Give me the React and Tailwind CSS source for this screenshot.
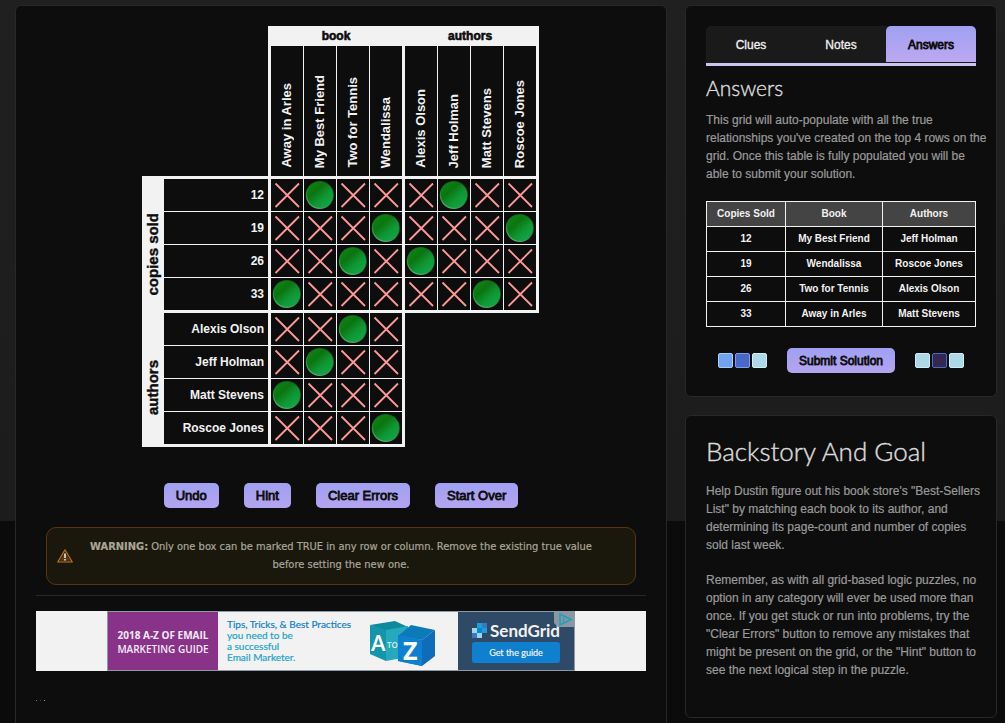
import React from "react";

const BOOKS = ["Away in Arles", "My Best Friend", "Two for Tennis", "Wendalissa"];
const AUTHORS = ["Alexis Olson", "Jeff Holman", "Matt Stevens", "Roscoe Jones"];

const SOLD_ROWS = [
  { label: "12", marks: "xoxxxoxx" },
  { label: "19", marks: "xxxoxxxo" },
  { label: "26", marks: "xxoxoxxx" },
  { label: "33", marks: "oxxxxxox" },
];

const AUTHOR_ROWS = [
  { label: "Alexis Olson", marks: "xxox" },
  { label: "Jeff Holman", marks: "xoxx" },
  { label: "Matt Stevens", marks: "oxxx" },
  { label: "Roscoe Jones", marks: "xxxo" },
];

const ANSWERS = [
  ["12", "My Best Friend", "Jeff Holman"],
  ["19", "Wendalissa", "Roscoe Jones"],
  ["26", "Two for Tennis", "Alexis Olson"],
  ["33", "Away in Arles", "Matt Stevens"],
];

const LINE = "border-[#f2f2f2]";

function Mark({ value }) {
  if (value === "o") {
    return (
      <svg viewBox="0 0 32 32" className="block size-8" aria-hidden="true">
        <circle cx="15.8" cy="16" r="14" fill="url(#rim)" />
        <circle cx="16" cy="15.8" r="13" fill="url(#ball)" />
      </svg>
    );
  }
  return (
    <svg viewBox="0 0 32 32" className="block size-8" aria-hidden="true">
      <path d="M4.5 4.5 28 28M28 4.5 4.5 28" stroke="#ff9999" strokeWidth="1.8" fill="none" />
    </svg>
  );
}

function Gradients() {
  return (
    <svg className="absolute size-0" aria-hidden="true">
      <defs>
        <linearGradient id="ball" x1="0.15" y1="0.1" x2="0.85" y2="0.9">
          <stop offset="0" stopColor="#0c8210" />
          <stop offset="0.3" stopColor="#0b7510" />
          <stop offset="0.65" stopColor="#0f9634" />
          <stop offset="1" stopColor="#11a548" />
        </linearGradient>
        <linearGradient id="rim" x1="0.7" y1="0" x2="0.3" y2="1">
          <stop offset="0" stopColor="#0b5a14" />
          <stop offset="0.6" stopColor="#1c8234" />
          <stop offset="1" stopColor="#58b070" />
        </linearGradient>
      </defs>
    </svg>
  );
}

function MarkCells({ row }) {
  return row.marks.split("").map((mark, i) => (
    <td
      key={i}
      className={`p-0 ${LINE} ${i % 4 === 3 ? "border-r-3" : "border-r"} ${row.last ? "border-b-3" : "border-b"}`}
    >
      <button type="button" className="block size-8" aria-label={mark === "o" ? "True" : "False"}>
        <Mark value={mark} />
      </button>
    </td>
  ));
}

function RowGroup({ title, rows, trailing }) {
  return rows.map((row, r) => {
    const last = r === rows.length - 1;
    return (
      <tr key={row.label}>
        {r === 0 && (
          <th rowSpan={4} className="bg-[#f2f2f2] p-0">
            <div className="mr-auto ml-auto w-4 rotate-180 pb-4 text-center text-[15px] leading-4 font-bold text-[#0d0d0d] [-webkit-text-stroke:0.4px_#0d0d0d] [writing-mode:vertical-rl]">
              {title}
            </div>
          </th>
        )}
        <th
          scope="row"
          className={`border-r-3 ${LINE} ${last ? "border-b-3" : "border-b"} p-0 pr-1 text-right text-[12px] leading-4 font-bold text-[#f2f2f2]`}
        >
          {row.label}
        </th>
        <MarkCells row={{ ...row, last }} />
        {trailing && r === 0 && <td rowSpan={4} colSpan={4} className="p-0" />}
      </tr>
    );
  });
}

function LogicGrid() {
  return (
    <div className="mx-auto w-[398px]">
      <table className="w-[397px] table-fixed border-separate border-spacing-0">
        <colgroup>
          <col className="w-[22px]" />
          <col className="w-[107px]" />
          <col className="w-[33px]" />
          <col className="w-[33px]" />
          <col className="w-[33px]" />
          <col className="w-[35px]" />
          <col className="w-[33px]" />
          <col className="w-[33px]" />
          <col className="w-[33px]" />
          <col className="w-[35px]" />
        </colgroup>
        <thead>
          <tr className="h-5">
            <td rowSpan={2} colSpan={2} className={`border-r-3 border-b-3 p-0 ${LINE}`} />
            {["book", "authors"].map((t) => (
              <th
                key={t}
                colSpan={4}
                className="h-5 bg-[#f2f2f2] p-0 pr-1 text-[12px] leading-5 font-bold text-[#0d0d0d] [-webkit-text-stroke:0.6px_#0d0d0d]"
              >
                {t}
              </th>
            ))}
          </tr>
          <tr>
            {[...BOOKS, ...AUTHORS].map((name, i) => (
              <th
                key={name}
                scope="col"
                className={`h-[133px] border-b-3 p-0 align-bottom ${LINE} ${i % 4 === 3 ? "border-r-3" : "border-r"}`}
              >
                <div className="mr-auto mb-2 ml-auto w-4 rotate-180 text-left text-[13px] leading-4 font-bold whitespace-nowrap text-[#f2f2f2] [writing-mode:vertical-rl]">
                  {name}
                </div>
              </th>
            ))}
          </tr>
        </thead>
        <tbody>
          <RowGroup title="copies sold" rows={SOLD_ROWS} />
          <RowGroup title="authors" rows={AUTHOR_ROWS} trailing />
        </tbody>
      </table>
    </div>
  );
}

function ActionButton({ size = "text-[13px]", children }) {
  return (
    <button
      type="button"
      className={`h-[25px] rounded-[5px] bg-linear-to-b from-[#a0a0f2] to-[#b4a4f0] px-3 leading-4 text-[#0d0d0d] [-webkit-text-stroke:0.8px_#0d0d0d] ${size}`}
    >
      {children}
    </button>
  );
}

function Cubes() {
  return (
    <svg viewBox="0 0 68 46" className="h-[46px] w-[68px]" aria-hidden="true">
      <path d="M1 5 26 1 39 7 17 11z" fill="#0d8a9c" />
      <path d="M1 5 17 10v31L1 34z" fill="#1395ab" />
      <path d="M17 10 39 6v31l-22 4z" fill="#27a9bd" />
      <path d="M29 16 42 5 66 10 53 20z" fill="#0d7ab8" />
      <path d="M29 15 53 20v26L29 41z" fill="#0f80d0" />
      <path d="M53 20 66 10v26L53 46z" fill="#0e6cbb" />
      <g fontFamily="'Open Sans', sans-serif" fill="#fff">
        <text x="2" y="31" fontSize="22" fontWeight="600">A</text>
        <text x="18" y="28" fontSize="8" fontWeight="600" fill="#d7f0f4">TO</text>
        <path d="M29 15 53 20v26L29 41z" fill="#0f80d0" />
        <text x="34" y="40" fontSize="25" fontWeight="700">Z</text>
      </g>
    </svg>
  );
}

function SendGridMark() {
  return (
    <svg viewBox="0 0 15 15" className="size-[15px] shrink-0" aria-hidden="true">
      <path d="M0 5h5v5H0z" fill="#9dd6ea" />
      <path d="M0 10h5v5H0z" fill="#3a78c4" />
      <path d="M5 10h5v5H5z" fill="#9dd6ea" />
      <path d="M5 0h5v5H5z" fill="#1ba0dc" />
      <path d="M5 5h5v5H5z" fill="#0d86d0" />
      <path d="M10 0h5v5h-5z" fill="#3a78c4" />
      <path d="M10 5h5v5h-5z" fill="#1ba0dc" />
    </svg>
  );
}

function Banner() {
  return (
    <div className="mt-[15px] flex justify-center bg-[#f2f2f2]">
      <a
        href="#guide"
        className="relative flex h-[60px] w-[468px] border border-[#8d9aa5] font-['Lato',sans-serif]"
      >
        <span className="flex w-[110px] shrink-0 flex-col items-center justify-center bg-[#883288] pt-[2px] font-['Open_Sans',sans-serif] text-[10px] leading-[14px] whitespace-nowrap text-[#f4ecf8]">
          <span className="font-bold">2018 A-Z OF EMAIL</span>
          <span className="font-semibold">MARKETING GUIDE</span>
        </span>
        <span className="flex w-[142px] shrink-0 flex-col justify-center pl-[9px] text-[10px] leading-[11px] whitespace-nowrap text-[#21a3c9] [-webkit-text-stroke:0.2px]">
          <span className="text-[#0f7fd0]">Tips, Tricks, &amp; Best Practices</span>
          <span>you need to be</span>
          <span>a successful</span>
          <span>Email Marketer.</span>
        </span>
        <span className="flex flex-1 items-center pl-[9px] pt-1">
          <Cubes />
        </span>
        <span className="flex w-[116px] shrink-0 flex-col items-center bg-[#2e4a66] pt-[7px]">
          <span className="flex w-[88px] items-center gap-[3px] text-[17px] leading-[23px] font-bold whitespace-nowrap text-[#f2f2f2]">
            <SendGridMark />
            SendGrid
          </span>
          <span className="h-[21px] w-[88px] rounded-[3px] bg-[#0f7fd0] text-center text-[9px] leading-[21px] text-[#f2f2f2] [-webkit-text-stroke:0.2px]">
            Get the guide
          </span>
        </span>
        <svg viewBox="0 0 20 15" className="absolute top-0 right-0 h-[15px] w-5" aria-hidden="true">
          <path d="M0 0h20v15H4L0 11z" fill="#8b97a1" />
          <path d="M6 2v11l11-5.5z" fill="none" stroke="#20a0c0" strokeWidth="1.5" />
          <path d="M9.5 6.5V10M9.5 4.5v1" stroke="#20a0c0" strokeWidth="1.5" />
        </svg>
      </a>
    </div>
  );
}

function WarningIcon() {
  return (
    <svg viewBox="0 0 16 14" className="h-[14px] w-4 shrink-0" aria-hidden="true">
      <path d="M8 .8 15.3 13H.7z" fill="#3a2610" stroke="#b8731c" strokeWidth="1.2" strokeLinejoin="round" />
      <path d="M8 3.8 12.8 11.5H3.2z" fill="#5c3a14" />
      <path d="M8 4.5V9M8 10v1.5" stroke="#dcdcdc" strokeWidth="1.7" />
    </svg>
  );
}

function Swatches({ colors }) {
  return (
    <div className="flex gap-[2px]" aria-hidden="true">
      {colors.map((c, i) => (
        <span key={i} className={`size-[15px] rounded-[2px] border ${c}`} />
      ))}
    </div>
  );
}

function Panel({ className, children }) {
  return <section className={`border border-[#282828] bg-[#0d0d0d] p-5 ${className}`}>{children}</section>;
}

function Tab({ active, children }) {
  return (
    <button
      type="button"
      role="tab"
      aria-selected={Boolean(active)}
      className={`h-9 flex-1 rounded-t-[5px] pt-px text-[12px] leading-4 ${
        active
          ? "bg-linear-to-b from-[#a0a0f2] to-[#bca8f0] text-[#0d0d0d] [-webkit-text-stroke:0.8px_#0d0d0d]"
          : "text-[#f2f2f2] [-webkit-text-stroke:0.3px_#f2f2f2]"
      }`}
    >
      {children}
    </button>
  );
}

const COPY = "-mr-3 text-[12px] leading-[18px] text-[#9a9a9a] [-webkit-text-stroke:0.2px_#9a9a9a]";
const HEADING = "font-['Lato',sans-serif] font-light text-[#dcdcdc] [-webkit-text-stroke:0.4px_#dcdcdc]";

export default function App() {
  return (
    <main className="flex min-h-screen gap-[18px] bg-[linear-gradient(#202020_0,#1c1c1c_521px,#0b0b0b_521px)] pt-[5px] pr-2 pl-[15px] font-['Liberation_Sans',Arial,sans-serif]">
      <Gradients />
      <Panel className="min-w-0 flex-1 rounded-t-[6px] border-b-0">
        <LogicGrid />
        <div className="mt-9 flex justify-center gap-[25px]">
          <ActionButton>Undo</ActionButton>
          <ActionButton>Hint</ActionButton>
          <ActionButton>Clear Errors</ActionButton>
          <ActionButton>Start Over</ActionButton>
        </div>
        <div
          role="alert"
          className="mx-[10px] mt-[19px] flex items-center rounded-[10px] border border-[#5a3510] bg-[#1a170d] px-[10px] py-[10px]"
        >
          <WarningIcon />
          <p className="flex-1 pr-7 pl-3 text-center font-['DejaVu_Sans_Condensed','DejaVu_Sans',sans-serif] text-[11px] leading-[18px] text-[#a9a697] [-webkit-text-stroke:0.2px_#a9a697]">
            <strong>WARNING:</strong> Only one box can be marked TRUE in any row or column. Remove the existing true
            value before setting the new one.
          </p>
        </div>
        <hr className="mt-[10px] border-[#282828]" />
        <Banner />
        <div className="mt-[29px] flex gap-[3px]" aria-hidden="true">
          <span className="size-px bg-[#20b030]" />
          <span className="size-px bg-[#802028]" />
          <span className="size-px bg-[#9090a8]" />
        </div>
      </Panel>

      <aside className="flex w-[312px] shrink-0 flex-col gap-[18px] pb-1">
        <Panel className="rounded-[6px]">
          <div role="tablist" className="flex rounded-t-[5px] border-b-3 border-[#c9c4f0] bg-[#1a1a1a] pb-px">
            <Tab>Clues</Tab>
            <Tab>Notes</Tab>
            <Tab active>Answers</Tab>
          </div>
          <h2 className={`mt-[10px] text-[21px] leading-6 ${HEADING}`}>Answers</h2>
          <p className={`mt-[11px] ${COPY}`}>
            This grid will auto-populate with all the true relationships you've created on the top 4 rows on the grid.
            Once this table is fully populated you will be able to submit your solution.
          </p>
          <table className="mt-[18px] w-full border-collapse text-center text-[10px] leading-4 font-bold text-[#f2f2f2]">
            <thead>
              <tr className="h-[25px] bg-[#444444]">
                <th className="w-[79px] border border-[#f2f2f2] p-0">Copies Sold</th>
                <th className="w-[97px] border border-[#f2f2f2] p-0">Book</th>
                <th className="border border-[#f2f2f2] p-0">Authors</th>
              </tr>
            </thead>
            <tbody>
              {ANSWERS.map((row) => (
                <tr key={row[0]} className="h-[25px]">
                  {row.map((cell) => (
                    <td key={cell} className="border border-[#f2f2f2] p-0">
                      {cell}
                    </td>
                  ))}
                </tr>
              ))}
            </tbody>
          </table>
          <div className="mt-[21px] mb-[3px] flex items-center justify-between px-3">
            <Swatches
              colors={["border-[#a8ccf8] bg-[#70a4f0]", "border-[#7c9cf0] bg-[#4a68c8]", "border-[#d0ecf4] bg-[#add8e8]"]}
            />
            <ActionButton size="text-[12px]">Submit Solution</ActionButton>
            <Swatches
              colors={["border-[#d0ecf4] bg-[#add8e8]", "border-[#4a68c8] bg-[#352850]", "border-[#d0ecf4] bg-[#add8e8]"]}
            />
          </div>
        </Panel>

        <Panel className="rounded-[6px]">
          <h1 className={`text-[26px] leading-[30px] ${HEADING}`}>Backstory And Goal</h1>
          <p className={`mt-4 ${COPY}`}>
            Help Dustin figure out his book store's "Best-Sellers List" by matching each book to its author, and
            determining its page-count and number of copies sold last week.
          </p>
          <p className={`mt-[17px] mb-[18px] ${COPY}`}>
            Remember, as with all grid-based logic puzzles, no option in any category will ever be used more than once.
            If you get stuck or run into problems, try the "Clear Errors" button to remove any mistakes that might be
            present on the grid, or the "Hint" button to see the next logical step in the puzzle.
          </p>
        </Panel>
      </aside>
    </main>
  );
}
